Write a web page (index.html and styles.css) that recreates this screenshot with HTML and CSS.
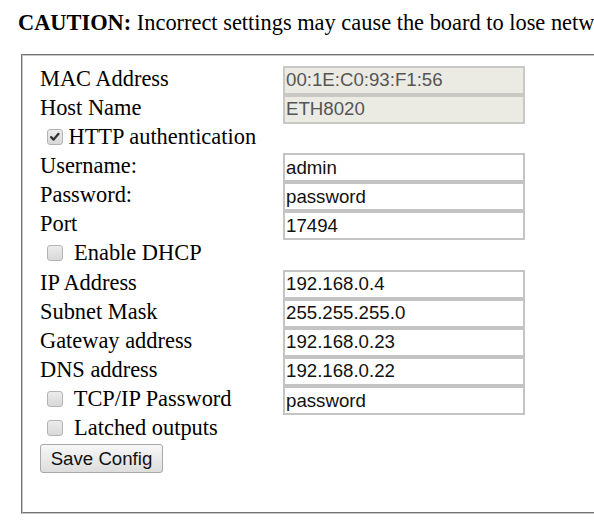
FILE: index.html
```html
<!DOCTYPE html>
<html>
<head>
<meta charset="utf-8">
<title>Network Config</title>
<link rel="stylesheet" href="styles.css">
</head>
<body>
<p class="caution"><b>CAUTION:</b> Incorrect settings may cause the board to lose network connectivity.</p>
<form class="panel">
  <div class="grid">
    <div class="lbl">MAC Address</div>
    <input class="field" type="text" value="00:1E:C0:93:F1:56" disabled>
    <div class="lbl">Host Name</div>
    <input class="field" type="text" value="ETH8020" disabled>
    <div class="lbl wide"><input class="cb" type="checkbox" checked><span class="cbtext">HTTP authentication</span></div>
    <div class="lbl">Username:</div>
    <input class="field" type="text" value="admin">
    <div class="lbl">Password:</div>
    <input class="field" type="text" value="password">
    <div class="lbl">Port</div>
    <input class="field" type="text" value="17494">
    <div class="lbl wide"><input class="cb" type="checkbox"> <span class="cbtext">Enable DHCP</span></div>
    <div class="lbl">IP Address</div>
    <input class="field" type="text" value="192.168.0.4">
    <div class="lbl">Subnet Mask</div>
    <input class="field" type="text" value="255.255.255.0">
    <div class="lbl">Gateway address</div>
    <input class="field" type="text" value="192.168.0.23">
    <div class="lbl">DNS address</div>
    <input class="field" type="text" value="192.168.0.22">
    <div class="lbl"><input class="cb" type="checkbox"> <span class="cbtext">TCP/IP Password</span></div>
    <input class="field" type="text" value="password">
    <div class="lbl wide"><input class="cb" type="checkbox"> <span class="cbtext">Latched outputs</span></div>
    <div class="wide"><button class="btn" type="button">Save Config</button></div>
  </div>
</form>
</body>
</html>
```
FILE: styles.css
```css
html, body {
  margin: 0;
  padding: 0;
  background: #fff;
  overflow: hidden;
}
body {
  width: 594px;
  height: 521px;
  font-family: "Liberation Serif", "Times New Roman", serif;
  color: #000;
}
.caution {
  margin: 10px 0 0 18px;
  font-size: 22.4px;
  line-height: 25.8px;
  white-space: nowrap;
}
.caution b {
  font-weight: bold;
}
.panel {
  margin: 18px 0 0 21px;
  width: 640px;
  border: 2px groove #c8c8c8;
  padding: 10px 0 39px 17px;
  box-sizing: content-box;
}
.grid {
  display: grid;
  grid-template-columns: 243px 242px;
  grid-auto-rows: 29.12px;
  align-items: start;
}
.lbl {
  font-size: 22.4px;
  line-height: 25px;
  white-space: nowrap;
}
.wide {
  grid-column: 1 / 3;
}
.field {
  box-sizing: border-box;
  width: 242px;
  height: 29.12px;
  margin: 0;
  padding: 0 0 0 1px;
  border: 2px solid #c4c4c4;
  font-family: "Liberation Sans", Arial, sans-serif;
  font-size: 18.67px;
  color: #111;
  background: #fff;
  outline: none;
}
.field:disabled {
  background: #ebebe4;
  color: #555;
  border-color: #c8c8c4;
}
.cb {
  -webkit-appearance: none;
  appearance: none;
  width: 16px;
  height: 16px;
  margin: 0 6px 0 6.5px;
  border: 1px solid #b4b4b4;
  border-radius: 3px;
  background: linear-gradient(#ececec, #d8d8d8);
  vertical-align: -1px;
  box-sizing: border-box;
}
.cb:checked {
  background-image: url("data:image/svg+xml;utf8,<svg xmlns='http://www.w3.org/2000/svg' viewBox='0 0 16 16'><path d='M3.6 8.2 L6.4 11 L12 4.4' fill='none' stroke='%23333' stroke-width='2.6' stroke-linecap='round' stroke-linejoin='round'/></svg>"), linear-gradient(#ececec, #d8d8d8);
}
.btn {
  box-sizing: border-box;
  width: 123px;
  height: 29px;
  margin: 0;
  padding: 0;
  border: 1px solid #a9a9a9;
  border-radius: 3px;
  background: linear-gradient(#f7f7f7, #dddddd);
  font-family: "Liberation Sans", Arial, sans-serif;
  font-size: 18.67px;
  color: #111;
}
```
